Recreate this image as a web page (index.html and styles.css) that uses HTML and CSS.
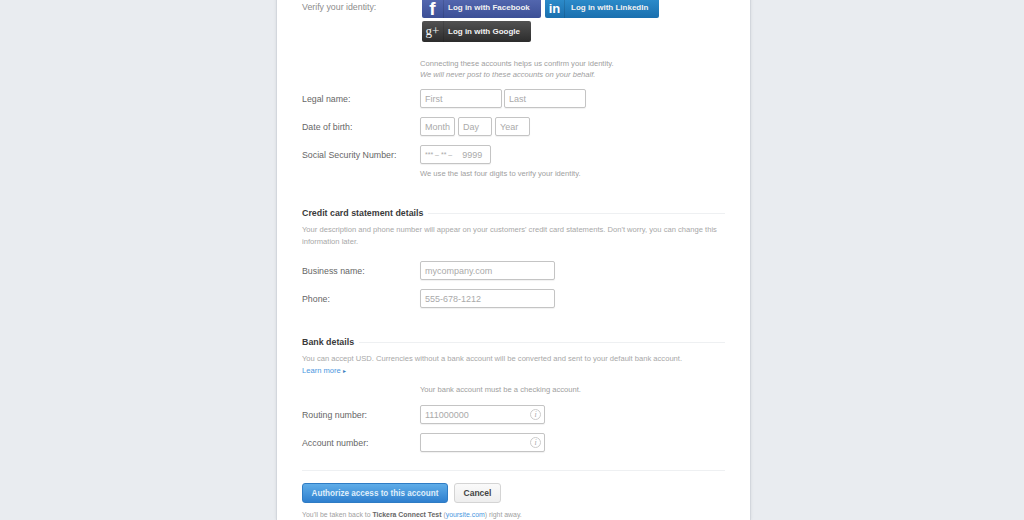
FILE: index.html
```html
<!DOCTYPE html>
<html lang="en">
<head>
    <meta charset="UTF-8">
    <title>Activate your account</title>
    <link rel="stylesheet" href="styles.css">
</head>
<body>

<div class="card">
    <div class="row verify-row">
        <div class="label verify-label">Verify your identity:</div>
        <div class="social-group">
            <a class="social facebook"><span class="social-icon icon-f">f</span><span class="social-text">Log in with Facebook</span></a>
            <a class="social linkedin"><span class="social-icon icon-in">in</span><span class="social-text">Log in with LinkedIn</span></a>
            <a class="social google"><span class="social-icon icon-g">g+</span><span class="social-text">Log in with Google</span></a>
        </div>
    </div>
    <div class="note connect-note">
        Connecting these accounts helps us confirm your identity.<br>
        <em>We will never post to these accounts on your behalf.</em>
    </div>

    <div class="row">
        <div class="label">Legal name:</div>
        <div class="fields">
            <div class="input w-name placeholder">First</div>
            <div class="input w-name placeholder">Last</div>
        </div>
    </div>
    <div class="row">
        <div class="label">Date of birth:</div>
        <div class="fields dob-fields">
            <div class="input w-month placeholder">Month</div>
            <div class="input w-day placeholder">Day</div>
            <div class="input w-year placeholder">Year</div>
        </div>
    </div>
    <div class="row">
        <div class="label">Social Security Number:</div>
        <div class="fields">
            <div class="input w-ssn placeholder"><span class="ssn-mask">*** – ** –</span><span>9999</span></div>
        </div>
    </div>
    <div class="note ssn-note">We use the last four digits to verify your identity.</div>

    <div class="section-title credit-title"><span>Credit card statement details</span></div>
    <p class="section-text">Your description and phone number will appear on your customers' credit card statements. Don't worry, you can change this information later.</p>
    <div class="row business-row">
        <div class="label">Business name:</div>
        <div class="fields"><div class="input w-wide placeholder">mycompany.com</div></div>
    </div>
    <div class="row">
        <div class="label">Phone:</div>
        <div class="fields"><div class="input w-wide placeholder">555-678-1212</div></div>
    </div>

    <div class="section-title bank-title"><span>Bank details</span></div>
    <p class="section-text">You can accept USD. Currencies without a bank account will be converted and sent to your default bank account.<br>
        <a class="link">Learn more <span class="caret">▸</span></a></p>
    <div class="note checking-note">Your bank account must be a checking account.</div>
    <div class="row">
        <div class="label">Routing number:</div>
        <div class="fields"><div class="input w-bank placeholder">111000000<span class="info">i</span></div></div>
    </div>
    <div class="row">
        <div class="label">Account number:</div>
        <div class="fields"><div class="input w-bank"><span class="info">i</span></div></div>
    </div>

    <div class="actions">
        <button class="btn-primary">Authorize access to this account</button>
        <button class="btn-cancel">Cancel</button>
    </div>
    <p class="footer-text">You'll be taken back to <b>Tickera Connect Test</b> (<a class="link">yoursite.com</a>) right away.<br>
        By registering your account, you agree to <a class="link">Terms of Service</a> and <a class="link">Connected Account Agreement</a>.</p>
</div>

</body>
</html>
```

FILE: styles.css
```css
html, body {
    height: 100%;
}

body {
    margin: 0;
    overflow: hidden;
    background: #e9ecf0;
    font-family: 'Liberation Sans', Arial, sans-serif;
    font-size: 8.8px;
    color: #555;
}

.card {
    box-sizing: border-box;
    width: 475px;
    height: 523px;
    margin: -3px 0 0 276px;
    padding: 0 25px;
    overflow: hidden;
    background: #fff;
    border-left: 1px solid #d3d7dd;
    border-right: 1px solid #d3d7dd;
    box-shadow: 0 0 3px rgba(0, 0, 0, 0.08);
}

.row {
    display: flex;
    align-items: center;
    height: 19px;
    margin-bottom: 9px;
}

.label {
    width: 118px;
    flex-shrink: 0;
    color: #666;
}

.fields {
    display: flex;
    gap: 2px;
}

.dob-fields {
    gap: 3px;
}

.input {
    box-sizing: border-box;
    position: relative;
    display: flex;
    align-items: center;
    height: 19px;
    padding: 0 4px;
    background: #fff;
    border: 1px solid #c4c4c4;
    border-radius: 2px;
    box-shadow: 0 1px 1px rgba(0, 0, 0, 0.06);
    font-size: 9px;
    color: #999;
}

.placeholder {
    color: #aaa;
}

.w-name { width: 82px; }
.w-month { width: 35px; }
.w-day { width: 34px; }
.w-year { width: 35px; }
.w-ssn { width: 71px; }
.w-wide { width: 135px; }
.w-bank { width: 125px; }

.ssn-mask {
    margin-right: 10px;
    font-size: 7px;
}

.info {
    position: absolute;
    top: 3px;
    right: 3px;
    width: 9px;
    height: 9px;
    border: 1px solid #ccc;
    border-radius: 50%;
    font-family: 'Liberation Serif', serif;
    font-style: italic;
    font-size: 8px;
    line-height: 9px;
    text-align: center;
    color: #aaa;
}

.verify-row {
    align-items: flex-start;
    height: auto;
    margin-bottom: 0;
}

.verify-label {
    width: 120px;
    padding-top: 5px;
    color: #8c8c8c;
}

.social-group {
    display: flex;
    flex-wrap: wrap;
    gap: 3px 4px;
    width: 304px;
}

.social {
    display: flex;
    align-items: center;
    box-sizing: border-box;
    height: 21px;
    border-radius: 2px;
    color: #f2f2f2;
    font-weight: bold;
    font-size: 8px;
}

.social-icon {
    box-sizing: border-box;
    width: 22px;
    height: 21px;
    text-align: center;
    font-weight: bold;
    flex-shrink: 0;
    border-right: 1px solid rgba(0, 0, 0, 0.12);
}

.social-text {
    padding-left: 4px;
}

.facebook {
    width: 119px;
    background: linear-gradient(#566ab2, #3c4f96);
}

.linkedin {
    width: 114px;
    background: linear-gradient(#2f8fce, #1a6fae);
}

.linkedin .social-icon {
    width: 20px;
}

.linkedin .social-text {
    padding-left: 6px;
}

.google {
    width: 109px;
    background: linear-gradient(#525252, #2c2c2c);
}

.icon-f {
    font-size: 19px;
    line-height: 24px;
    color: #fff;
}

.icon-in {
    font-size: 13px;
    line-height: 23px;
    color: #fff;
}

.icon-g {
    font-family: 'Liberation Serif', serif;
    font-weight: normal;
    font-size: 13px;
    line-height: 19px;
}

.note {
    margin-left: 118px;
    color: #a0a0a0;
    font-size: 7.6px;
}

.connect-note {
    margin-top: 16px;
    margin-bottom: 9px;
    line-height: 11px;
}

.ssn-note {
    margin-top: -4px;
}

.section-title {
    display: flex;
    align-items: center;
    gap: 5px;
    font-weight: bold;
    color: #3a3a3a;
    font-size: 8.85px;
}

.section-title::after {
    content: '';
    flex: 1;
    height: 1px;
    background: #eef0f2;
}

.credit-title {
    margin-top: 30px;
}

.bank-title {
    margin-top: 29px;
}

.section-text {
    margin: 6px 0 0;
    color: #a8a8a8;
    font-size: 7.6px;
    line-height: 12px;
}

.business-row {
    margin-top: 13px;
}

.link {
    color: #4a97e0;
}

.caret {
    font-size: 6px;
    color: #3b7fc0;
}

.checking-note {
    margin-top: 8px;
    margin-bottom: 11px;
}

.actions {
    display: flex;
    gap: 6px;
    margin-top: 18px;
    padding-top: 12px;
    border-top: 1px solid #eef0f2;
}

.btn-primary, .btn-cancel {
    height: 20px;
    padding: 0;
    border-radius: 3px;
    font-family: inherit;
    font-weight: bold;
}

.btn-primary {
    width: 146px;
    background: linear-gradient(#5fade8, #2f80cf);
    border: 1px solid #2f7cc4;
    color: #dfeefb;
    font-size: 8.15px;
}

.btn-cancel {
    width: 47px;
    background: linear-gradient(#fafafa, #eeeeee);
    border: 1px solid #d4d4d4;
    color: #444;
    font-size: 8.5px;
}

.footer-text {
    margin: 7px 0 0;
    color: #a0a0a0;
    font-size: 6.9px;
    line-height: 9px;
}

.footer-text b {
    color: #666;
}
```
